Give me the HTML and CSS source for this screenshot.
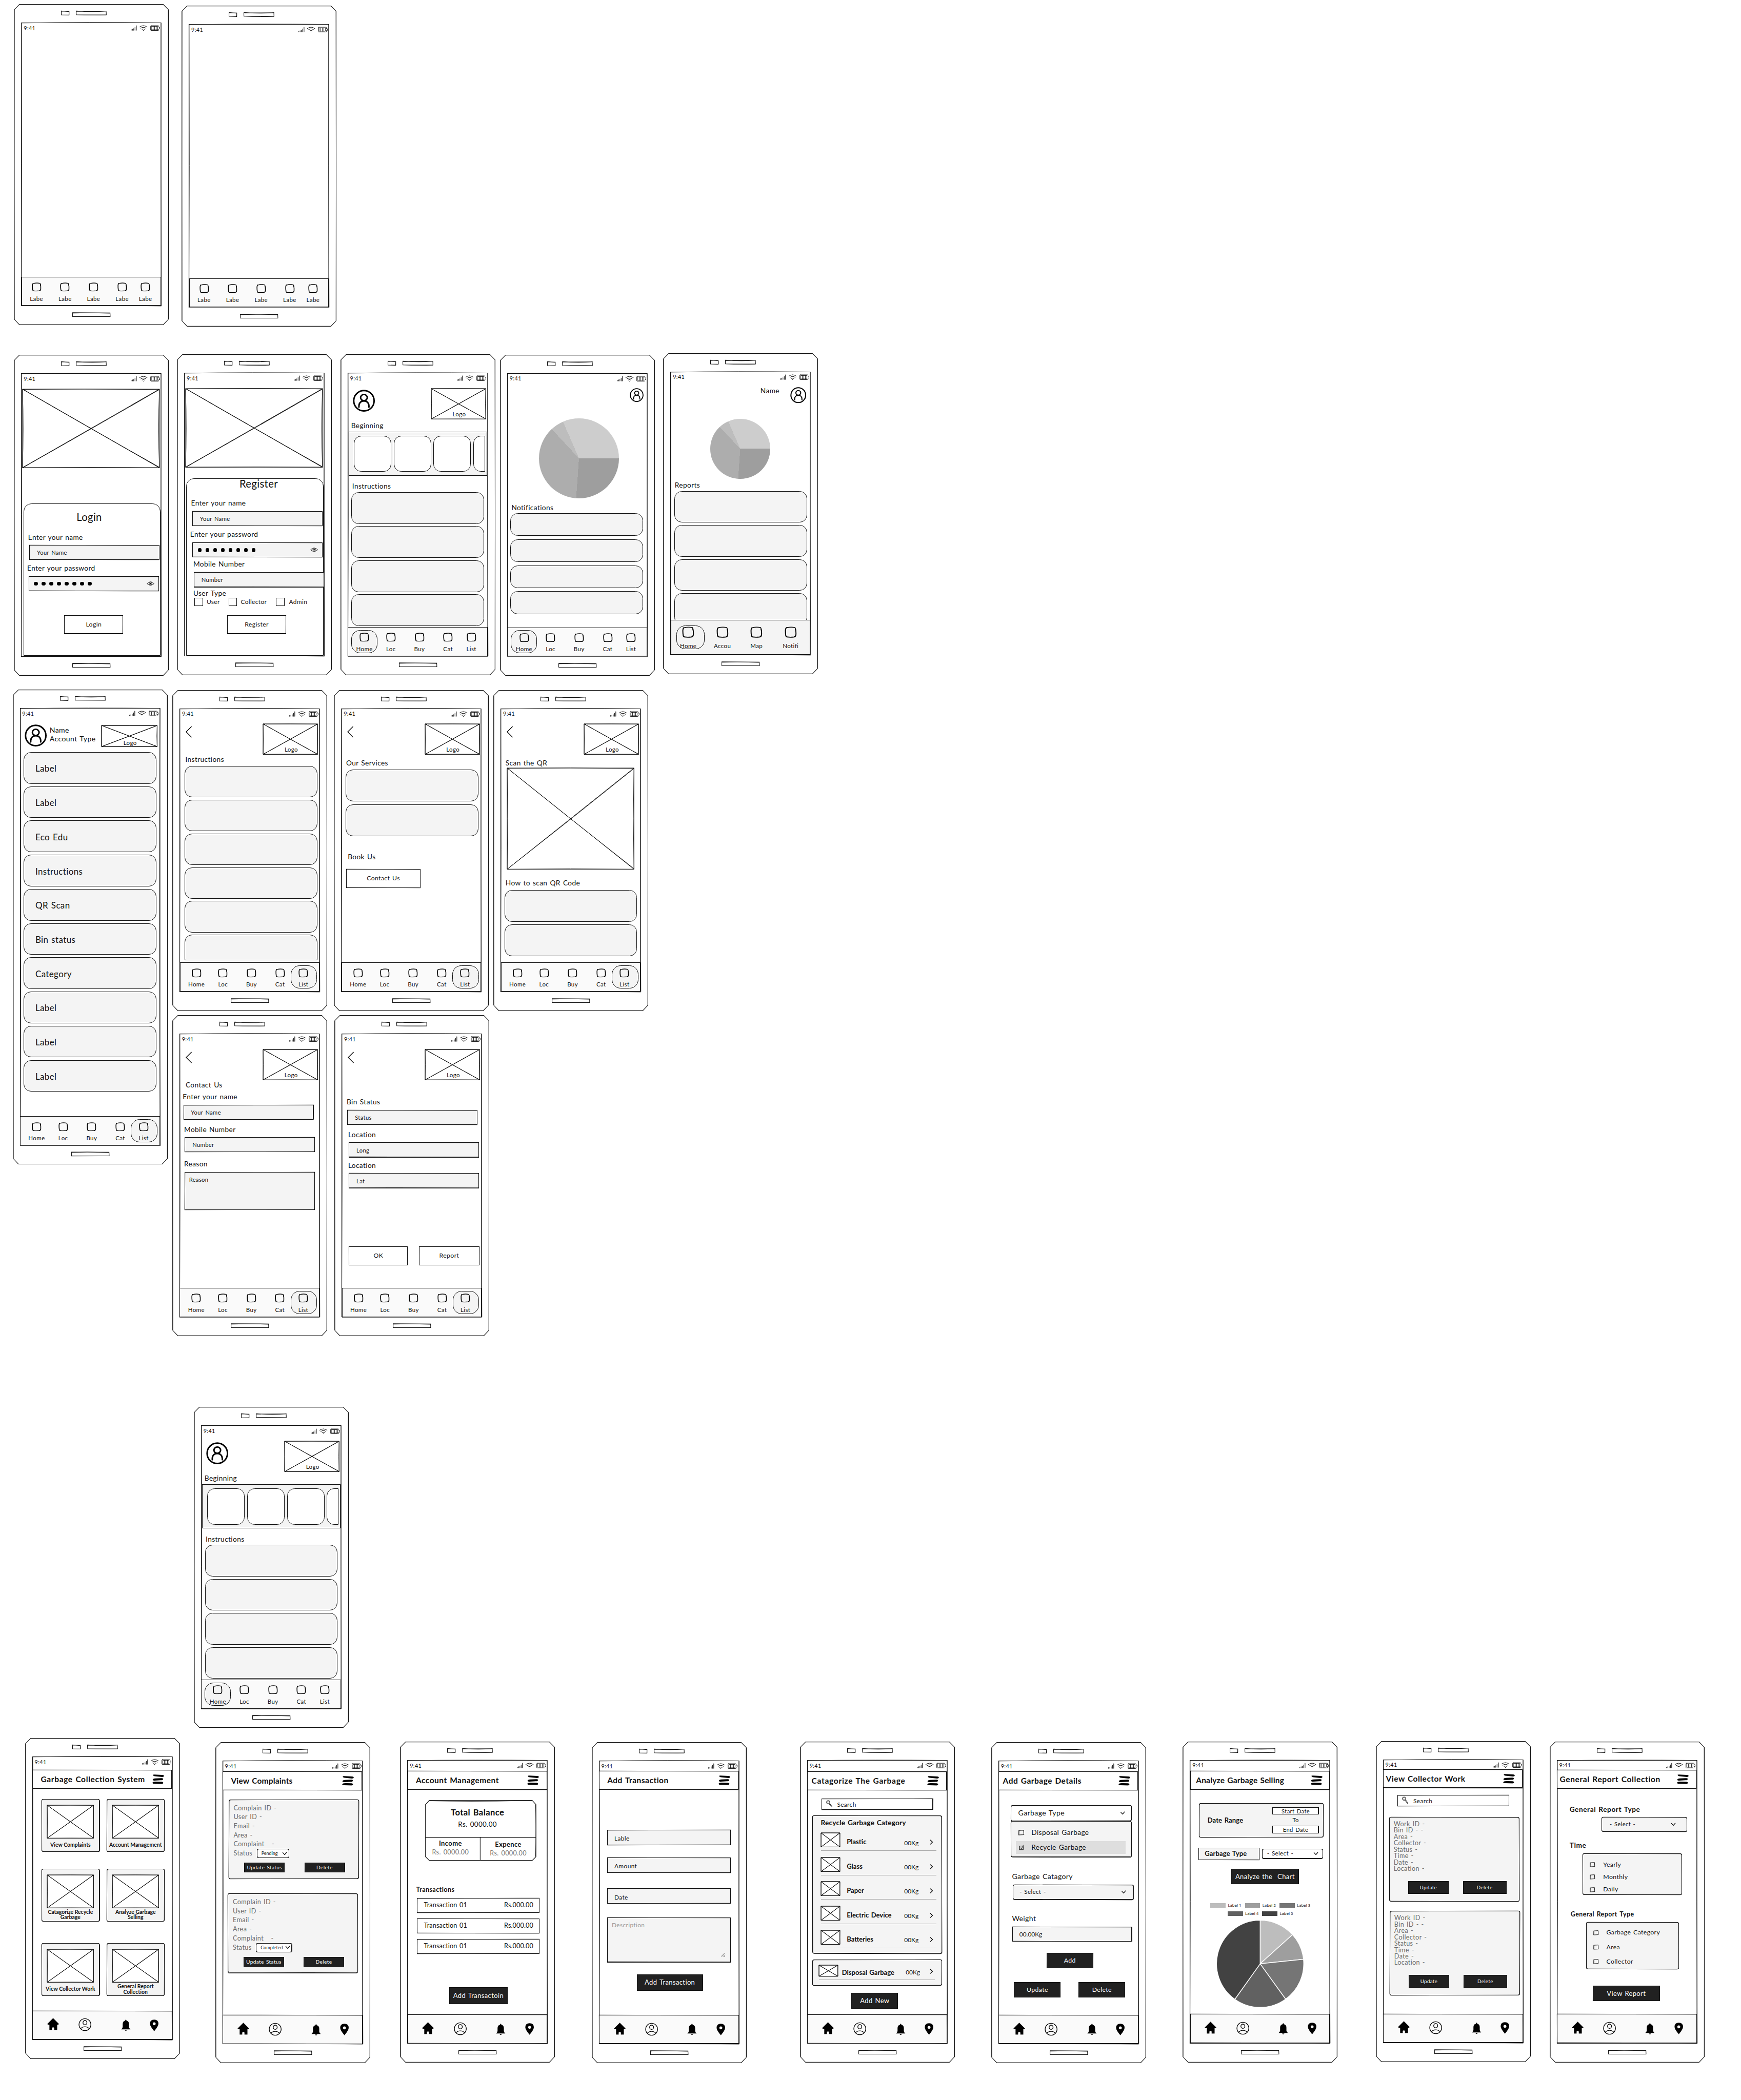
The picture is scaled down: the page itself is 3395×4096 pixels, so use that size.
FILE: index.html
```html
<!DOCTYPE html>
<html lang="en">
<head>
<meta charset="utf-8">
<title>Garbage Collection System wireframes</title>
<link rel="stylesheet" href="styles.css">
</head>
<body>
<svg class="defs" aria-hidden="true">
  <symbol id="case" viewBox="0 0 418 866">
    <g fill="none" stroke="#111" stroke-width="1.5">
      <path d="M15 .8H403L417 15V850L403 865H15L1 850V15Z"/>
      <path d="M1.6 15Q.6 430 1.6 850M416.4 15Q417.6 430 416.6 850" stroke-width="1"/>
      <path d="M128 19l21 .6-.4 10-20.6-.6zM127.500 18.500l21.500 2v9.500M168 19.500l81-.4.4 10-81-.4zM168 18.500q40 3.500 82 .5M168 29q40 1.500 81 .3"/>
      <path d="M158.500 832.500l101 .4.4 10-101.400.2zM158.500 833.500q50-1.600 101 .6"/>
      <path d="M20 50.500H397V814H20Z"/>
      <path d="M19.500 51Q200 48.500 397 50.500Q396 430 398 814M20.600 50Q22 430 20 814Q200 812 398 814.500" stroke-width="1.200"/>
    </g>
  </symbol>
  <symbol id="case-tall" viewBox="0 0 418 1281">
    <g fill="none" stroke="#111" stroke-width="1.5">
      <path d="M15 .8H403L417 15V1265L403 1280H15L1 1265V15Z"/>
      <path d="M1.600 15Q.6 630 1.600 1265M416.400 15Q417.600 630 416.600 1265" stroke-width="1"/>
      <path d="M128 19l21 .6-.4 10-20.600-.6zM127.500 18.500l21.500 2v9.500M168 19.500l81-.4.4 10-81-.4zM168 18.500q40 3.500 82 .5"/>
      <path d="M158.500 1247.500l101 .4.4 10-101.400.2zM158.500 1248.500q50-1.600 101 .6"/>
      <path d="M20 50.500H397V1230H20Z"/>
      <path d="M19.500 51Q200 48.500 397 50.500Q393 630 398 1230M20.600 50Q23 630 20 1230Q200 1227 398 1230.500" stroke-width="1.200"/>
    </g>
  </symbol>
  <symbol id="signals" viewBox="0 0 80 16">
    <g fill="none" stroke="#111" stroke-width="1.600" stroke-linecap="round">
      <path d="M1 14v-2M4.500 14v-3M8 14V9.500M11.500 14V6M15 14V1.500"/>
      <path d="M24 5Q34-2.500 44 5M27 8.500Q34 3.500 41 8.500M30.500 11.500Q34 9 37.500 11.500M33.700 14.500h.6" stroke-width="1.400"/>
      <path d="M55 1.500h19q1.500 0 1.500 1.500v2.500h2.500v5h-2.500V13q0 1.500-1.500 1.500H55q-1.500 0-1.500-1.500V3q0-1.500 1.500-1.500z" stroke-width="1.300"/>
      <path d="M56 3.500h16.500v9H56zM60.200 3.500v9M64.300 3.500v9M68.500 3.500v9" stroke-width="1.200"/>
    </g>
  </symbol>
  <symbol id="cross" viewBox="0 0 100 100" preserveAspectRatio="none" overflow="visible">
    <rect width="100" height="100" fill="#fff"/>
    <g fill="none" stroke="#111" stroke-width="1">
      <path vector-effect="non-scaling-stroke" d="M0 0H100V100H0Z"/>
      <path vector-effect="non-scaling-stroke" d="M0 .3Q50-.6 100 .5Q99 50 100 100Q50 99.300 0 100Q.8 50 0 0"/>
      <path vector-effect="non-scaling-stroke" d="M0 0L100 100M0 100L100 0"/>
      <path vector-effect="non-scaling-stroke" d="M0 100Q50 51 100 .5M0 0Q50 50.500 100 99.500"/>
    </g>
  </symbol>
  <symbol id="tab" viewBox="0 0 26 24">
    <path d="M4.500 2.200Q2 3 1.600 8Q1.400 14 2.400 20Q3 22.600 6 22.800Q13 23.600 20 22.600Q23.600 22 24.200 18Q24.800 11 23.200 5" fill="none" stroke="#000" stroke-width="2.200"/>
    <path d="M4.500 2.600Q13 .4 22 2.200Q23.500 3.600 23.600 8" fill="none" stroke="#000" stroke-width="1.900"/>
  </symbol>
  <symbol id="avatar" viewBox="0 0 60 60">
    <g fill="none" stroke="#000" stroke-width="4" stroke-linecap="round">
      <circle cx="30" cy="30" r="27.500"/>
      <ellipse cx="30" cy="21.500" rx="9" ry="8.500"/>
      <path d="M16.500 47.500V44C16.500 36 22 30.500 30 30.500S43.500 36 43.500 44V47.500"/>
    </g>
  </symbol>
  <symbol id="back" viewBox="0 0 18 33"><path d="M17 1L1.500 16.500L17 32" fill="none" stroke="#000" stroke-width="2"/></symbol>
  <symbol id="down" viewBox="0 0 14 9"><path d="M1.500 1.500L7 7.500L12.500 1" fill="none" stroke="#111" stroke-width="1.800"/></symbol>
  <symbol id="next" viewBox="0 0 9 14"><path d="M1.500 1L7.500 7L1.500 13" fill="none" stroke="#000" stroke-width="1.900"/></symbol>
  <symbol id="eye" viewBox="0 0 21 12">
    <path d="M1 6Q10.500-4 20 6Q10.500 15 1 6Z" fill="none" stroke="#111" stroke-width="1.300"/>
    <circle cx="10.500" cy="6" r="3.600" fill="none" stroke="#111" stroke-width="1.200"/><circle cx="10.500" cy="6" r="1.900"/>
  </symbol>
  <symbol id="menu" viewBox="0 0 32 26">
    <path d="M2 1Q1 .2 6 .3L27 1.400Q32 1.800 31.500 4.500Q31 7.500 24 6.600L7 5Q2.500 4.500 2 1ZM1 14Q2 11 8 10.600L25 9.900Q30 10 29 13Q28.500 15.800 23 15.600L6 16.600Q1 17 1 14ZM.5 22Q2 19.500 9 19.300L25 19.800Q30 20.500 29.500 23Q29 25.700 23 25.500L5 25Q0 24.600 .5 22Z"/>
  </symbol>
  <symbol id="search" viewBox="0 0 17 20">
    <circle cx="5.500" cy="5.800" r="4.600" fill="none" stroke="#111" stroke-width="1.300"/>
    <circle cx="5.500" cy="5.800" r="3.200" fill="none" stroke="#111" stroke-width=".7"/>
    <path d="M7.800 10L14 18.500Q15.500 19 16 17.200L9.600 8.800" fill="#aaa" stroke="#111" stroke-width="1.200"/>
  </symbol>
  <symbol id="home" viewBox="0 0 32 33"><path d="M16 .5L31.500 16Q31.500 18 29.500 18H27V32.500H19V27Q16 23.500 13 27V32.500H6V18H2.500Q.5 18 .5 16Z"/></symbol>
  <symbol id="user" viewBox="0 0 36 36">
    <g fill="none" stroke="#000" stroke-width="2">
      <circle cx="18" cy="18" r="16.500"/><ellipse cx="18" cy="12.500" rx="5.500" ry="5.800"/><path d="M6 29Q11 23.800 18 23.800T30 29"/>
    </g>
  </symbol>
  <symbol id="bell" viewBox="0 0 26 31"><path d="M11.200 3Q11.500 .5 13 .5T14.800 3Q21.500 4.500 21.500 12V20Q21.500 23 25.500 26.500H.5Q4.500 23 4.500 20V12Q4.500 4.500 11.200 3ZM10 28H16Q15.500 30.500 13 30.500T10 28Z"/></symbol>
  <symbol id="pin" viewBox="0 0 24 32"><path fill-rule="evenodd" d="M12 .5Q23.500 .8 23.500 11.500Q23.500 18 12 31.500Q.5 18 .5 11.500Q.5 .8 12 .5ZM12 7.500a4 4 0 1 0 .01 0Z"/></symbol>
  <symbol id="check" viewBox="0 0 16 15"><path d="M1.500 1.800L14 1L14.800 13.200L1 14Z" fill="#f4f4f4" stroke="#111" stroke-width="1.500"/><path d="M1 1.200V14.500" stroke="#111"/></symbol>
  <symbol id="checked" viewBox="0 0 16 18"><path d="M1 4.500H14.500V16.500H1ZM2 5V15.500H13.500V5.500" fill="none" stroke="#111" stroke-width="1.200"/><path d="M4.500 9.500L8 13.500L14.500 1" fill="none" stroke="#111" stroke-width="1.500"/></symbol>
</svg>

<main class="board">

<section class="phone blank-a"><svg class="case"><use href="#case"/></svg><div class="screen">
  <div class="status"><span>9:41</span><svg class="signals"><use href="#signals"/></svg></div>
  <div class="content"></div>
  <nav class="tabs even"><span><svg><use href="#tab"/></svg>Labe</span><span><svg><use href="#tab"/></svg>Labe</span><span><svg><use href="#tab"/></svg>Labe</span><span><svg><use href="#tab"/></svg>Labe</span><span><svg><use href="#tab"/></svg>Labe</span></nav>
</div></section>

<section class="phone blank-b"><svg class="case"><use href="#case"/></svg><div class="screen">
  <div class="status"><span>9:41</span><svg class="signals"><use href="#signals"/></svg></div>
  <div class="content"></div>
  <nav class="tabs even"><span><svg><use href="#tab"/></svg>Labe</span><span><svg><use href="#tab"/></svg>Labe</span><span><svg><use href="#tab"/></svg>Labe</span><span><svg><use href="#tab"/></svg>Labe</span><span><svg><use href="#tab"/></svg>Labe</span></nav>
</div></section>

<section class="phone login"><svg class="case"><use href="#case"/></svg><div class="screen">
  <div class="status"><span>9:41</span><svg class="signals"><use href="#signals"/></svg></div>
  <div class="content">
    <svg class="banner"><use href="#cross"/></svg>
    <form class="sheet">
      <h2>Login</h2>
      <label>Enter your name</label>
      <div class="field sk">Your Name</div>
      <label class="pull">Enter your password</label>
      <div class="field secret pull sk"><i></i><i></i><i></i><i></i><i></i><i></i><i></i><i></i><svg><use href="#eye"/></svg></div>
      <div class="btn sk">Login</div>
    </form>
  </div>
</div></section>

<section class="phone register"><svg class="case"><use href="#case"/></svg><div class="screen">
  <div class="status"><span>9:41</span><svg class="signals"><use href="#signals"/></svg></div>
  <div class="content">
    <svg class="banner"><use href="#cross"/></svg>
    <form class="sheet">
      <h2>Register</h2>
      <label>Enter your name</label>
      <div class="field sk">Your Name</div>
      <label class="pull">Enter your password</label>
      <div class="field secret sk"><i></i><i></i><i></i><i></i><i></i><i></i><i></i><i></i><svg><use href="#eye"/></svg></div>
      <label class="push">Mobile Number</label>
      <div class="field push sk">Number</div>
      <label class="push">User Type</label>
      <div class="roles"><b></b><span>User</span><b></b><span>Collector</span><b></b><span>Admin</span></div>
      <div class="btn sk">Register</div>
    </form>
  </div>
</div></section>

<section class="phone begin begin-a"><svg class="case"><use href="#case"/></svg><div class="screen">
  <div class="status"><span>9:41</span><svg class="signals"><use href="#signals"/></svg></div>
  <div class="content">
    <div class="top"><svg class="avatar"><use href="#avatar"/></svg><div class="logo"><svg><use href="#cross"/></svg><span>Logo</span></div></div>
    <h3>Beginning</h3>
    <div class="strip"><b></b><b></b><b></b><b></b></div>
    <h3 class="in">Instructions</h3>
    <div class="list"><b></b><b></b><b></b><b></b></div>
  </div>
  <nav class="tabs"><span class="on"><svg><use href="#tab"/></svg>Home</span><span><svg><use href="#tab"/></svg>Loc</span><span><svg><use href="#tab"/></svg>Buy</span><span><svg><use href="#tab"/></svg>Cat</span><span><svg><use href="#tab"/></svg>List</span></nav>
</div></section>

<section class="phone notes"><svg class="case"><use href="#case"/></svg><div class="screen">
  <div class="status"><span>9:41</span><svg class="signals"><use href="#signals"/></svg></div>
  <div class="content">
    <div class="top"><svg class="avatar small"><use href="#avatar"/></svg></div>
    <div class="pie"></div>
    <h3>Notifications</h3>
    <div class="list"><b></b><b></b><b></b><b></b></div>
  </div>
  <nav class="tabs"><span class="on"><svg><use href="#tab"/></svg>Home</span><span><svg><use href="#tab"/></svg>Loc</span><span><svg><use href="#tab"/></svg>Buy</span><span><svg><use href="#tab"/></svg>Cat</span><span><svg><use href="#tab"/></svg>List</span></nav>
</div></section>

<section class="phone reports"><svg class="case"><use href="#case"/></svg><div class="screen">
  <div class="status"><span>9:41</span><svg class="signals"><use href="#signals"/></svg></div>
  <div class="content">
    <div class="top"><h3>Name</h3><svg class="avatar"><use href="#avatar"/></svg></div>
    <div class="pie"></div>
    <h3>Reports</h3>
    <div class="list"><b></b><b></b><b></b><b></b></div>
  </div>
  <nav class="tabs four"><span class="on"><svg><use href="#tab"/></svg>Home</span><span><svg><use href="#tab"/></svg>Accou</span><span><svg><use href="#tab"/></svg>Map</span><span><svg><use href="#tab"/></svg>Notifi</span></nav>
</div></section>

<section class="phone tall"><svg class="case"><use href="#case-tall"/></svg><div class="screen">
  <div class="status"><span>9:41</span><svg class="signals"><use href="#signals"/></svg></div>
  <div class="content">
    <div class="top"><svg class="avatar"><use href="#avatar"/></svg><p>Name<br>Account Type</p><div class="logo"><svg><use href="#cross"/></svg><span>Logo</span></div></div>
    <div class="list"><b>Label</b><b>Label</b><b>Eco Edu</b><b>Instructions</b><b>QR Scan</b><b>Bin status</b><b>Category</b><b>Label</b><b>Label</b><b>Label</b></div>
  </div>
  <nav class="tabs"><span><svg><use href="#tab"/></svg>Home</span><span><svg><use href="#tab"/></svg>Loc</span><span><svg><use href="#tab"/></svg>Buy</span><span><svg><use href="#tab"/></svg>Cat</span><span class="on"><svg><use href="#tab"/></svg>List</span></nav>
</div></section>

<section class="phone guide"><svg class="case"><use href="#case"/></svg><div class="screen">
  <div class="status"><span>9:41</span><svg class="signals"><use href="#signals"/></svg></div>
  <div class="content">
    <div class="top"><svg class="back"><use href="#back"/></svg><div class="logo"><svg><use href="#cross"/></svg><span>Logo</span></div></div>
    <h3>Instructions</h3>
    <div class="list"><b></b><b></b><b></b><b></b><b></b><b></b></div>
  </div>
  <nav class="tabs"><span><svg><use href="#tab"/></svg>Home</span><span><svg><use href="#tab"/></svg>Loc</span><span><svg><use href="#tab"/></svg>Buy</span><span><svg><use href="#tab"/></svg>Cat</span><span class="on"><svg><use href="#tab"/></svg>List</span></nav>
</div></section>

<section class="phone services"><svg class="case"><use href="#case"/></svg><div class="screen">
  <div class="status"><span>9:41</span><svg class="signals"><use href="#signals"/></svg></div>
  <div class="content">
    <div class="top"><svg class="back"><use href="#back"/></svg><div class="logo"><svg><use href="#cross"/></svg><span>Logo</span></div></div>
    <h3>Our Services</h3>
    <div class="list"><b></b><b></b></div>
    <h3 class="in">Book Us</h3>
    <div class="btn sk">Contact Us</div>
  </div>
  <nav class="tabs"><span><svg><use href="#tab"/></svg>Home</span><span><svg><use href="#tab"/></svg>Loc</span><span><svg><use href="#tab"/></svg>Buy</span><span><svg><use href="#tab"/></svg>Cat</span><span class="on"><svg><use href="#tab"/></svg>List</span></nav>
</div></section>

<section class="phone scan"><svg class="case"><use href="#case"/></svg><div class="screen">
  <div class="status"><span>9:41</span><svg class="signals"><use href="#signals"/></svg></div>
  <div class="content">
    <div class="top"><svg class="back"><use href="#back"/></svg><div class="logo"><svg><use href="#cross"/></svg><span>Logo</span></div></div>
    <h3>Scan the QR</h3>
    <svg class="code"><use href="#cross"/></svg>
    <h3>How to scan QR Code</h3>
    <div class="list"><b></b><b></b></div>
  </div>
  <nav class="tabs"><span><svg><use href="#tab"/></svg>Home</span><span><svg><use href="#tab"/></svg>Loc</span><span><svg><use href="#tab"/></svg>Buy</span><span><svg><use href="#tab"/></svg>Cat</span><span class="on"><svg><use href="#tab"/></svg>List</span></nav>
</div></section>

<section class="phone contact"><svg class="case"><use href="#case"/></svg><div class="screen">
  <div class="status"><span>9:41</span><svg class="signals"><use href="#signals"/></svg></div>
  <div class="content">
    <div class="top"><svg class="back"><use href="#back"/></svg><div class="logo"><svg><use href="#cross"/></svg><span>Logo</span></div></div>
    <h3>Contact Us</h3>
    <label class="pull">Enter your name</label>
    <div class="field pull sk">Your Name</div>
    <label>Mobile Number</label>
    <div class="field sk">Number</div>
    <label>Reason</label>
    <div class="field area sk">Reason</div>
  </div>
  <nav class="tabs"><span><svg><use href="#tab"/></svg>Home</span><span><svg><use href="#tab"/></svg>Loc</span><span><svg><use href="#tab"/></svg>Buy</span><span><svg><use href="#tab"/></svg>Cat</span><span class="on"><svg><use href="#tab"/></svg>List</span></nav>
</div></section>

<section class="phone bin"><svg class="case"><use href="#case"/></svg><div class="screen">
  <div class="status"><span>9:41</span><svg class="signals"><use href="#signals"/></svg></div>
  <div class="content">
    <div class="top"><svg class="back"><use href="#back"/></svg><div class="logo"><svg><use href="#cross"/></svg><span>Logo</span></div></div>
    <label class="pull">Bin Status</label>
    <div class="field pull sk">Status</div>
    <label>Location</label>
    <div class="field sk">Long</div>
    <label>Location</label>
    <div class="field sk">Lat</div>
    <div class="pair"><div class="btn sk">OK</div><div class="btn sk">Report</div></div>
  </div>
  <nav class="tabs"><span><svg><use href="#tab"/></svg>Home</span><span><svg><use href="#tab"/></svg>Loc</span><span><svg><use href="#tab"/></svg>Buy</span><span><svg><use href="#tab"/></svg>Cat</span><span class="on"><svg><use href="#tab"/></svg>List</span></nav>
</div></section>

<section class="phone begin begin-b"><svg class="case"><use href="#case"/></svg><div class="screen">
  <div class="status"><span>9:41</span><svg class="signals"><use href="#signals"/></svg></div>
  <div class="content">
    <div class="top"><svg class="avatar"><use href="#avatar"/></svg><div class="logo"><svg><use href="#cross"/></svg><span>Logo</span></div></div>
    <h3>Beginning</h3>
    <div class="strip"><b></b><b></b><b></b><b></b></div>
    <h3 class="in">Instructions</h3>
    <div class="list"><b></b><b></b><b></b><b></b></div>
  </div>
  <nav class="tabs"><span class="on"><svg><use href="#tab"/></svg>Home</span><span><svg><use href="#tab"/></svg>Loc</span><span><svg><use href="#tab"/></svg>Buy</span><span><svg><use href="#tab"/></svg>Cat</span><span><svg><use href="#tab"/></svg>List</span></nav>
</div></section>

<section class="phone dash"><svg class="case"><use href="#case"/></svg><div class="screen">
  <div class="status"><span>9:41</span><svg class="signals"><use href="#signals"/></svg></div>
  <div class="content">
    <h1 class="bar sk">Garbage Collection System<svg><use href="#menu"/></svg></h1>
    <div class="tiles">
      <div class="tile sk"><svg><use href="#cross"/></svg><p>View Complaints</p></div>
      <div class="tile sk"><svg><use href="#cross"/></svg><p>Account Management</p></div>
      <div class="tile sk"><svg><use href="#cross"/></svg><p>Catagorize Recycle<br>Garbage</p></div>
      <div class="tile sk"><svg><use href="#cross"/></svg><p>Analyze Garbage<br>Selling</p></div>
      <div class="tile sk"><svg><use href="#cross"/></svg><p>View Collector Work</p></div>
      <div class="tile sk"><svg><use href="#cross"/></svg><p>General Report<br>Collection</p></div>
    </div>
  </div>
  <nav class="dock sk"><svg><use href="#home"/></svg><svg><use href="#user"/></svg><svg><use href="#bell"/></svg><svg><use href="#pin"/></svg></nav>
</div></section>

<section class="phone complaints"><svg class="case"><use href="#case"/></svg><div class="screen">
  <div class="status"><span>9:41</span><svg class="signals"><use href="#signals"/></svg></div>
  <div class="content">
    <h1 class="bar sk">View Complaints<svg><use href="#menu"/></svg></h1>
    <div class="record sk">
      <p>Complain ID -</p><p>User ID -</p><p>Email -</p><p>Area -</p><p>Complaint&nbsp;&nbsp; -</p>
      <p class="state">Status<span class="select sk">Pending<svg><use href="#down"/></svg></span></p>
      <div class="pair"><div class="btn dark sk">Update Status</div><div class="btn dark sk">Delete</div></div>
    </div>
    <div class="record second sk">
      <p>Complain ID -</p><p>User ID -</p><p>Email -</p><p>Area -</p><p>Complaint&nbsp;&nbsp; -</p>
      <p class="state">Status<span class="select wide sk">Completed<svg><use href="#down"/></svg></span></p>
      <div class="pair"><div class="btn dark sk">Update Status</div><div class="btn dark sk">Delete</div></div>
    </div>
  </div>
  <nav class="dock sk"><svg><use href="#home"/></svg><svg><use href="#user"/></svg><svg><use href="#bell"/></svg><svg><use href="#pin"/></svg></nav>
</div></section>

<section class="phone account"><svg class="case"><use href="#case"/></svg><div class="screen">
  <div class="status"><span>9:41</span><svg class="signals"><use href="#signals"/></svg></div>
  <div class="content">
    <h1 class="bar sk">Account Management<svg><use href="#menu"/></svg></h1>
    <div class="balance">
      <svg class="outline" viewBox="0 0 301 164"><g fill="none" stroke="#111" stroke-width="1.600"><path d="M11 1H290L300 12V153L290 163H11L1 153V12Z"/><path d="M11 1.600Q150 4 290 .6M299 12Q301 80 299 153M1 100.500H300M149 100.500V163" /></g></svg>
      <div class="total"><strong>Total Balance</strong><span>Rs. 0000.00</span></div>
      <div class="part"><strong>Income</strong><span>Rs. 0000.00</span></div>
      <div class="part late"><strong>Expence</strong><span>Rs. 0000.00</span></div>
    </div>
    <h4>Transactions</h4>
    <div class="entry sk"><span>Transaction 01</span><span>Rs.000.00</span></div>
    <div class="entry sk"><span>Transaction 01</span><span>Rs.000.00</span></div>
    <div class="entry sk"><span>Transaction 01</span><span>Rs.000.00</span></div>
    <div class="btn dark sk">Add Transactoin</div>
  </div>
  <nav class="dock sk"><svg><use href="#home"/></svg><svg><use href="#user"/></svg><svg><use href="#bell"/></svg><svg><use href="#pin"/></svg></nav>
</div></section>

<section class="phone adding"><svg class="case"><use href="#case"/></svg><div class="screen">
  <div class="status"><span>9:41</span><svg class="signals"><use href="#signals"/></svg></div>
  <div class="content">
    <h1 class="bar sk">Add Transaction<svg><use href="#menu"/></svg></h1>
    <div class="field sk">Lable</div>
    <div class="field sk">Amount</div>
    <div class="field sk">Date</div>
    <div class="field area sk">Description<svg class="grip" viewBox="0 0 12 11"><path d="M.5 10L10 .5M5 10.500L10.500 5M8.500 10.500L11 8" fill="none" stroke="#111"/></svg></div>
    <div class="btn dark sk">Add Transaction</div>
  </div>
  <nav class="dock sk"><svg><use href="#home"/></svg><svg><use href="#user"/></svg><svg><use href="#bell"/></svg><svg><use href="#pin"/></svg></nav>
</div></section>

<section class="phone category"><svg class="case"><use href="#case"/></svg><div class="screen">
  <div class="status"><span>9:41</span><svg class="signals"><use href="#signals"/></svg></div>
  <div class="content">
    <h1 class="bar sk">Catagorize The Garbage<svg><use href="#menu"/></svg></h1>
    <div class="search sk"><svg><use href="#search"/></svg>Search</div>
    <div class="panel sk">
      <h3>Recycle Garbage Category</h3>
      <div class="item"><svg class="thumb"><use href="#cross"/></svg><strong>Plastic</strong><span>00Kg</span><svg class="next"><use href="#next"/></svg></div>
      <div class="item"><svg class="thumb"><use href="#cross"/></svg><strong>Glass</strong><span>00Kg</span><svg class="next"><use href="#next"/></svg></div>
      <div class="item"><svg class="thumb"><use href="#cross"/></svg><strong>Paper</strong><span>00Kg</span><svg class="next"><use href="#next"/></svg></div>
      <div class="item"><svg class="thumb"><use href="#cross"/></svg><strong>Electric Device</strong><span>00Kg</span><svg class="next"><use href="#next"/></svg></div>
      <div class="item"><svg class="thumb"><use href="#cross"/></svg><strong>Batteries</strong><span>00Kg</span><svg class="next"><use href="#next"/></svg></div>
    </div>
    <div class="panel single sk">
      <div class="item"><svg class="thumb"><use href="#cross"/></svg><strong>Disposal Garbage</strong><span>00Kg</span><svg class="next"><use href="#next"/></svg></div>
    </div>
    <div class="btn dark sk">Add New</div>
  </div>
  <nav class="dock sk"><svg><use href="#home"/></svg><svg><use href="#user"/></svg><svg><use href="#bell"/></svg><svg><use href="#pin"/></svg></nav>
</div></section>

<section class="phone details"><svg class="case"><use href="#case"/></svg><div class="screen">
  <div class="status"><span>9:41</span><svg class="signals"><use href="#signals"/></svg></div>
  <div class="content">
    <h1 class="bar sk">Add Garbage Details<svg><use href="#menu"/></svg></h1>
    <div class="select head sk">Garbage Type<svg><use href="#down"/></svg></div>
    <div class="options sk">
      <div><svg><use href="#check"/></svg>Disposal Garbage</div>
      <div class="chosen"><svg><use href="#checked"/></svg>Recycle Garbage</div>
    </div>
    <label>Garbage Catagory</label>
    <div class="select grey sk">- Select -<svg><use href="#down"/></svg></div>
    <label>Weight</label>
    <div class="field sk">00.00Kg</div>
    <div class="btn dark sk">Add</div>
    <div class="pair"><div class="btn dark sk">Update</div><div class="btn dark sk">Delete</div></div>
  </div>
  <nav class="dock sk"><svg><use href="#home"/></svg><svg><use href="#user"/></svg><svg><use href="#bell"/></svg><svg><use href="#pin"/></svg></nav>
</div></section>

<section class="phone analyze"><svg class="case"><use href="#case"/></svg><div class="screen">
  <div class="status"><span>9:41</span><svg class="signals"><use href="#signals"/></svg></div>
  <div class="content">
    <h1 class="bar sk">Analyze Garbage Selling<svg><use href="#menu"/></svg></h1>
    <div class="range sk"><strong>Date Range</strong><div><span class="date sk">Start Date</span><span>To</span><span class="date sk">End Date</span></div></div>
    <div class="filter"><strong class="sk">Garbage Type</strong><div class="select sk">- Select -<svg><use href="#down"/></svg></div></div>
    <div class="btn dark sk">Analyze the&nbsp; Chart</div>
    <div class="legend"><span>Label 1</span><span>Label 2</span><span>Label 3</span><span>Label 4</span><span>Label 5</span></div>
    <svg class="chart" viewBox="-118 -118 236 236">
      <g stroke="#fff" stroke-width="2">
        <path fill="#bdbdbd" d="M0 0V-117.500A117.500 117.500 0 0 1 87.300 -78.600Z"/>
        <path fill="#9e9e9e" d="M0 0L87.300 -78.600A117.500 117.500 0 0 1 116.900 -12.300Z"/>
        <path fill="#757575" d="M0 0L116.900 -12.300A117.500 117.500 0 0 1 68.700 95.300Z"/>
        <path fill="#616161" d="M0 0L68.700 95.300A117.500 117.500 0 0 1 -68.200 95.700Z"/>
        <path fill="#424242" d="M0 0L-68.200 95.700A117.500 117.500 0 0 1 0 -117.500Z"/>
      </g>
    </svg>
  </div>
  <nav class="dock sk"><svg><use href="#home"/></svg><svg><use href="#user"/></svg><svg><use href="#bell"/></svg><svg><use href="#pin"/></svg></nav>
</div></section>

<section class="phone work"><svg class="case"><use href="#case"/></svg><div class="screen">
  <div class="status"><span>9:41</span><svg class="signals"><use href="#signals"/></svg></div>
  <div class="content">
    <h1 class="bar sk">View Collector Work<svg><use href="#menu"/></svg></h1>
    <div class="search sk"><svg><use href="#search"/></svg>Search</div>
    <div class="record sk">
      <p>Work ID -</p><p>Bin ID - -</p><p>Area -</p><p>Collector -</p><p>Status -</p><p>Time -</p><p>Date -</p><p>Location -</p>
      <div class="pair"><div class="btn dark sk">Update</div><div class="btn dark sk">Delete</div></div>
    </div>
    <div class="record second sk">
      <p>Work ID -</p><p>Bin ID - -</p><p>Area -</p><p>Collector -</p><p>Status -</p><p>Time -</p><p>Date -</p><p>Location -</p>
      <div class="pair"><div class="btn dark sk">Update</div><div class="btn dark sk">Delete</div></div>
    </div>
  </div>
  <nav class="dock sk"><svg><use href="#home"/></svg><svg><use href="#user"/></svg><svg><use href="#bell"/></svg><svg><use href="#pin"/></svg></nav>
</div></section>

<section class="phone general"><svg class="case"><use href="#case"/></svg><div class="screen">
  <div class="status"><span>9:41</span><svg class="signals"><use href="#signals"/></svg></div>
  <div class="content">
    <h1 class="bar sk">General Report Collection<svg><use href="#menu"/></svg></h1>
    <h4>General Report Type</h4>
    <div class="select grey sk">- Select -<svg><use href="#down"/></svg></div>
    <h4>Time</h4>
    <div class="checks sk"><p><svg><use href="#check"/></svg>Yearly</p><p><svg><use href="#check"/></svg>Monthly</p><p><svg><use href="#check"/></svg>Daily</p></div>
    <h4 class="minor">General Report Type</h4>
    <div class="checks low sk"><p><svg><use href="#check"/></svg>Garbage Category</p><p><svg><use href="#check"/></svg>Area</p><p><svg><use href="#check"/></svg>Collector</p></div>
    <div class="btn dark sk">View Report</div>
  </div>
  <nav class="dock sk"><svg><use href="#home"/></svg><svg><use href="#user"/></svg><svg><use href="#bell"/></svg><svg><use href="#pin"/></svg></nav>
</div></section>

</main>
</body>
</html>
```
FILE: styles.css
```css
/* 1rem is ten units of the wireframe canvas */
html { font-size: 7.23px; }
*, *::before, *::after { box-sizing: border-box; }
body {
  margin: 0;
  background: #fff;
  color: #111;
  font: 1.7rem/2rem Lato, "Open Sans", sans-serif;
  letter-spacing: .03em;
  word-spacing: .1em;
  white-space: nowrap;
}
h1, h2, h3, h4, p { margin: 0; font-weight: 400; }
h3, label { font-size: 1.9rem; line-height: 2rem; }
h4 { font-size: 1.75rem; line-height: 2rem; font-weight: 700; }
svg { display: block; overflow: visible; }
b, i, strong { font-style: normal; }
.defs { position: absolute; width: 0; height: 0; }
.board { position: relative; width: 3395px; height: 4096px; overflow: hidden; }

/* phones pinned on the canvas */
.phone { position: absolute; display: grid; width: 41.8rem; height: 86.6rem; }
.blank-a { left: 3.8rem; top: 1.1rem; }
.blank-b { left: 49rem; top: 1.5rem; }
.login { left: 3.8rem; top: 95.7rem; }
.register { left: 47.75rem; top: 95.55rem; }
.begin-a { left: 91.8rem; top: 95.58rem; }
.notes { left: 134.86rem; top: 95.66rem; }
.reports { left: 178.9rem; top: 95.26rem; }
.tall { left: 3.4rem; top: 186rem; height: 128.1rem; }
.guide { left: 46.5rem; top: 186.1rem; }
.services { left: 90.1rem; top: 186.1rem; }
.scan { left: 133.1rem; top: 186.1rem; }
.contact { left: 46.46rem; top: 273.88rem; }
.bin { left: 90.2rem; top: 273.88rem; }
.begin-b { left: 52.27rem; top: 379.58rem; }
.dash { left: 6.75rem; top: 468.86rem; }
.complaints { left: 58.06rem; top: 470rem; }
.account { left: 107.94rem; top: 469.87rem; }
.adding { left: 159.56rem; top: 469.98rem; }
.category { left: 215.75rem; top: 469.87rem; }
.details { left: 267.35rem; top: 469.98rem; }
.analyze { left: 319rem; top: 469.78rem; }
.work { left: 371.07rem; top: 469.66rem; }
.general { left: 417.93rem; top: 469.78rem; }

.case { grid-area: 1 / 1; width: 100%; height: 100%; }
.screen {
  grid-area: 1 / 1;
  display: flex;
  flex-direction: column;
  width: 37.7rem;
  height: 76.4rem;
  margin: 5rem 0 0 2rem;
}
.tall .screen { height: 118rem; }
.status {
  display: flex;
  justify-content: space-between;
  align-items: center;
  flex: none;
  height: 3rem;
  padding: 0 .2rem 0 .6rem;
  font-size: 1.5rem;
}
.signals { width: 8rem; height: 1.6rem; }
.content {
  display: grid;
  flex: 1;
  min-height: 0;
  align-items: end;
  align-content: start;
  justify-items: start;
}

/* pencil line: a second, slightly tilted outline over the first */
.sk { position: relative; border: 1px solid #111; }
.sk::after {
  content: "";
  position: absolute;
  inset: -1px;
  border: 1px solid #111;
  transform: rotate(.12deg) skewX(.3deg);
  pointer-events: none;
}
.sk:nth-child(even)::after { transform: rotate(-.1deg) skewX(-.4deg); }

/* bottom navigation */
.tabs, .dock { flex: none; height: 7.83rem; background: #fafafa; border: 1px solid #111; }
.tabs {
  display: grid;
  grid-template-columns: 8.7rem 5.6rem 9.8rem 5.6rem 7rem;
  border-width: 1.5px 1px;
  box-shadow: 0 1px #555;
  font-size: 1.6rem;
}
.tabs.even { grid-template-columns: 7.8rem 7.6rem 7.8rem 7.6rem 5rem; }
.tabs span { position: relative; display: flex; flex-direction: column; align-items: center; padding-top: 1.4rem; z-index: 0; }
.tabs svg { flex: none; width: 2.6rem; height: 2.4rem; margin-bottom: 1rem; }
.tabs .on::before {
  content: "";
  position: absolute;
  z-index: -1;
  top: .65rem;
  left: .75rem;
  width: 7.1rem;
  height: 6.25rem;
  background: #f4f4f4;
  border: 1px solid #111;
  border-radius: 2.4rem;
}
.tabs .on:last-child::before { left: .1rem; }
.tabs.four { grid-template-columns: repeat(4, 9.2rem); height: 9.4rem; background: #f4f4f4; }
.tabs.four span { padding-top: 1.6rem; }
.tabs.four svg { width: 3.3rem; height: 3rem; margin-bottom: 1.3rem; }
.tabs.four .on::before { top: 1.4rem; left: 1.4rem; width: 7.6rem; }

.dock { display: flex; align-items: flex-start; padding: 1.9rem 0 0 3.8rem; }
.dock svg { flex: none; }
.dock svg:nth-child(1) { width: 3.2rem; height: 3.3rem; margin-right: 5.3rem; }
.dock svg:nth-child(2) { width: 3.5rem; height: 3.6rem; margin-right: 7.9rem; }
.dock svg:nth-child(3) { width: 2.6rem; height: 3.1rem; margin: .4rem 5.2rem 0 0; }
.dock svg:nth-child(4) { width: 2.4rem; height: 3.2rem; margin-top: .3rem; }

/* shared pieces */
.top { display: flex; justify-content: space-between; width: 100%; height: 8.2rem; padding: 0 .5rem 0 1.3rem; }
.avatar { width: 6rem; height: 6rem; margin-top: .3rem; }
.back { width: 1.7rem; height: 3.2rem; margin: .6rem 0 0 .3rem; }
.logo { display: grid; grid-template: 100% / 100%; width: 14.7rem; height: 8.2rem; }
.logo svg { grid-area: 1 / 1; width: 100%; height: 100%; }
.logo span { grid-area: 1 / 1; place-self: end center; padding: 0 0 .2rem .4rem; font-size: 1.6rem; z-index: 1; }
.list { display: grid; gap: .66rem; width: 35.75rem; margin-left: 1rem; }
.list b { height: 8.53rem; background: #f4f4f4; border: 1px solid #111; border-radius: 2rem; font-weight: 400; }
.field {
  width: 35.1rem;
  height: 4.05rem;
  padding: 1rem 1.9rem;
  background: #f4f4f4;
  font-size: 1.55rem;
  line-height: 2rem;
}
.btn { display: grid; place-items: center; height: 5.1rem; background: #fff; font-size: 1.7rem; }
.dark { height: 4.2rem; background: #212121; color: #fff; font-size: 1.8rem; }
.pair { display: flex; align-items: flex-end; }
.select { display: flex; align-items: center; justify-content: space-between; background: #fff; border-radius: 3px; font-size: 1.6rem; }
.select::after, .record::after, .panel::after, .tile::after, .options::after, .range::after, .checks::after { border-radius: 4px; }
.select svg { width: 1.4rem; height: .9rem; }
.grey { background: #f4f4f4; }

/* sign-in sheets */
.login .content { grid-template-rows: 22.5rem 50.7rem; }
.register .content { grid-template-rows: 22.54rem 50.75rem; }
.banner { width: 36.9rem; height: 21.2rem; margin-left: .35rem; }
.sheet { display: grid; align-items: end; align-content: start; justify-items: start; width: 37rem; height: 41.1rem; margin-left: .5rem; border: 1px solid #111; border-radius: 2.1rem 2.1rem 0 0; }
.login .sheet { grid-template-rows: 5.15rem 4.85rem 5.15rem 3.2rem 5.2rem 11.53rem; }
.register .sheet { height: 47.8rem; grid-template-rows: 2.93rem 4.67rem 5.2rem 3.24rem 5.2rem 2.76rem 5.27rem 2.6rem 2.5rem 7.47rem; }
.sheet h2 { margin-left: 14.2rem; font-size: 2.8rem; line-height: 3rem; }
.sheet label { margin-left: 1.15rem; }
.sheet label.pull { margin-left: .9rem; }
.sheet .field { margin-left: 1.5rem; }
.login .field.pull { margin-left: 1.3rem; }
.sheet label.push { margin-left: 1.75rem; }
.sheet .field.push { margin-left: 1.9rem; }
.secret { display: flex; align-items: center; gap: 1.08rem; padding: 0 1.1rem 0 1.3rem; }
.secret i { width: 1rem; height: 1.05rem; border-radius: 45%; background: #000; }
.secret svg { width: 2.1rem; height: 1.2rem; margin-left: auto; }
.sheet .btn { width: 15.9rem; margin-left: 10.9rem; }
.roles { display: flex; align-items: center; margin-left: 2.1rem; font-size: 1.65rem; }
.roles b { width: 2.25rem; height: 2.25rem; border: 1.5px solid #111; background: #fff; }
.roles span { padding-left: 1rem; width: 6.95rem; }
.roles span:nth-of-type(2) { width: 10.55rem; }
.roles span:nth-of-type(3) { padding-left: 1.2rem; }

/* home feed */
.begin .content { grid-template-rows: 9.42rem 2.84rem 12.49rem 3.87rem 36.68rem; }
.content > h3 { margin-left: .9rem; }
.content > h3.in { margin-left: 1.2rem; }
.strip { display: flex; gap: .65rem; width: 37.3rem; height: 11.9rem; margin-left: .25rem; padding: .95rem .4rem .9rem 1.25rem; background: #f4f4f4; border: 1px solid #111; }
.strip b { flex: none; width: 10.1rem; background: #fff; border: 1px solid #111; border-radius: 2rem; }
.strip b:last-child { flex: 1; border-radius: 2rem 0 0 2rem; }

/* notifications and reports */
.notes .content { grid-template-rows: 4.86rem 25.89rem 3.53rem 27.72rem; }
.notes .top { height: 3.75rem; }
.notes .avatar { width: 3.75rem; height: 3.75rem; margin: 0 .4rem 0 auto; }
.pie { border-radius: 50%; background: conic-gradient(from 90deg, #9e9e9e 94deg, #adadad 94deg 227deg, #bdbdbd 227deg 246.5deg, #cdcdcd 246.5deg); }
.notes .pie { width: 21.57rem; height: 21.57rem; margin-left: 8.45rem; }
.notes .list { gap: .9rem; margin-left: .8rem; }
.notes .list b { height: 6.13rem; }
.reports .content { grid-template-rows: 5.5rem 20.37rem 2.73rem 35.5rem; flex: none; height: 64rem; }
.reports .top { height: 4.3rem; padding: 0 1.1rem 0 24.2rem; }
.reports .avatar { width: 4.35rem; height: 4.35rem; margin: 0; }
.reports .pie { width: 16.1rem; height: 16.1rem; margin-left: 10.7rem; }
.notes .content > h3, .reports .content > h3 { margin-left: 1.1rem; }
.reports .list { height: 34.9rem; overflow: hidden; align-content: start; }

/* long menu */
.tall .content { grid-template-rows: 7.5rem 93rem; }
.tall .top { height: 6rem; justify-content: flex-start; }
.tall .avatar { flex: none; margin: 0; }
.tall .top p { width: 14.7rem; padding: .15rem 0 0 .7rem; font-size: 1.95rem; line-height: 2.4rem; }
.tall .logo { height: 5.7rem; width: 15rem; flex: none; margin-top: .2rem; }
.tall .logo span { padding-bottom: 0; }
.tall .list b { padding: 3.1rem 0 0 3rem; font-size: 2.35rem; line-height: 2.4rem; }
.tall .list { gap: .7rem; }

/* back-arrow screens */
.guide .content { grid-template-rows: 9.4rem 2.34rem 53.26rem; }
.guide .list { height: 52.5rem; gap: .59rem; margin-left: 1.3rem; overflow: hidden; border-bottom: 1px solid #111; align-content: start; }
.guide .content > h3 { margin-left: 1.5rem; }
.services .content { grid-template-rows: 9.4rem 3.3rem 18.74rem 6.62rem 7.34rem; }
.services .content > h3, .scan .content > h3 { margin-left: 1.25rem; }
.services .list { gap: .8rem; margin-left: 1.15rem; }
.services .content > h3.in { margin-left: 1.7rem; }
.services .btn { width: 20rem; margin-left: 1.3rem; }
.scan .content { grid-template-rows: 9.4rem 3.3rem 27.7rem 4.67rem 18.8rem; }
.scan .code { width: 34.2rem; height: 27.3rem; margin-left: 1.75rem; }
.scan .list { gap: .75rem; }
.contact .content { grid-template-rows: 9.4rem 2.36rem 3.24rem 5.23rem 3.56rem 5.18rem 4.18rem 11.43rem; }
.contact .content > h3 { margin-left: 1.6rem; }
.contact label { margin-left: 1.2rem; }
.contact label.pull { margin-left: .8rem; }
.contact .field { margin-left: 1.4rem; }
.contact .field.pull { margin-left: 1rem; }
.contact .area { height: 10.3rem; padding-left: 1rem; }
.bin .content { grid-template-rows: 9.4rem 7rem 5.2rem 3.6rem 5.2rem 3.1rem 5.18rem 20.77rem; }
.bin label { margin-left: 1.7rem; }
.bin label.pull { margin-left: 1.3rem; }
.bin .field { margin-left: 1.9rem; }
.bin .field.pull { margin-left: 1.5rem; }
.bin .pair { gap: 3rem; margin-left: 1.9rem; }
.bin .btn { width: 15.9rem; }
.bin .btn + .btn { width: 16.3rem; }

/* admin screens */
.bar { display: flex; align-items: center; justify-content: space-between; width: 37.6rem; height: 5.1rem; padding: 0 2rem 0 2.1rem; background: #fff; font-size: 2.15rem; font-weight: 700; letter-spacing: .03em; }
.bar svg { flex: none; width: 3.2rem; height: 2.6rem; }

.dash .content { grid-template-rows: 5.66rem 55.9rem; }
.dash .bar { letter-spacing: .04em; }
.tiles { display: grid; grid-template: 17.04rem 18.8rem 20.08rem / 15.7rem 15.6rem; column-gap: 1.9rem; align-items: end; margin-left: 2.4rem; }
.tile { display: grid; grid-template-rows: 1.5rem 8.9rem 3.7rem; justify-items: center; height: 14.2rem; background: #f4f4f4; border-radius: 3px; font-size: 1.45rem; font-weight: 700; line-height: 1.45rem; text-align: center; letter-spacing: 0; word-spacing: 0; }
.tile svg { grid-row: 2; width: 12.5rem; height: 8.9rem; }
.tile p { grid-row: 3; align-self: center; font-weight: 700; }

.record { background: #f4f4f4; width: 35.1rem; color: #6b6b6b; border-radius: 3px; margin-left: 1.6rem; }
.complaints .content { grid-template-rows: 4.98rem 24rem 25.37rem; }
.complaints .bar { letter-spacing: .01em; }
.complaints .record { height: 21.5rem; padding: .9rem 0 0 1.2rem; font-size: 1.75rem; line-height: 2.45rem; }
.complaints .second { margin-left: 1.4rem; }
.state { display: flex; align-items: center; }
.state .select { width: 8.7rem; height: 2.5rem; margin-left: 1.2rem; padding: 0 .4rem 0 1.1rem; color: #111; font-size: 1.25rem; letter-spacing: 0; }
.state .wide { width: 9.75rem; }
.record .btn { width: 10.9rem; height: 2.65rem; font-size: 1.4rem; }
.complaints .pair { gap: 5.3rem; margin: 1.25rem 0 0 2.9rem; }

.account .content { grid-template-rows: 5rem 19.1rem 8.82rem 5.26rem 5.57rem 5.51rem 13.54rem; }
.balance { display: grid; grid-template: 10rem 6.4rem / 14.9rem 15.1rem; width: 30rem; margin-left: 4.7rem; text-align: center; }
.outline { grid-area: 1 / 1 / 3 / 3; width: 100%; height: 16.4rem; }
.total { grid-area: 1 / 1 / 2 / 3; display: grid; grid-template-rows: 3.2rem 3.3rem; padding: 1.8rem 1.7rem 0 0; align-items: center; }
.total strong { font-size: 2.3rem; }
.total span { font-size: 1.85rem; }
.part { grid-area: 2 / 1; display: grid; grid-template-rows: 2.5rem 2.5rem; align-items: center; align-content: start; padding: .5rem 1.2rem 0 0; }
.late { grid-column: 2; padding: .75rem 0 0; }
.part strong { font-size: 1.8rem; }
.part span { color: #777; font-size: 1.75rem; }
.account h4 { margin-left: 2.3rem; }
.entry { display: flex; justify-content: space-between; align-items: center; width: 33.1rem; height: 4.05rem; margin-left: 2.45rem; padding: 0 1.5rem 0 1.8rem; font-size: 1.75rem; letter-spacing: .01em; }
.account .btn { width: 15.8rem; height: 4.5rem; margin-left: 11.2rem; }

.adding .content { grid-template-rows: 4.83rem 14.93rem 7.52rem 8.32rem 15.84rem 7.56rem; }
.adding .field { width: 33.4rem; height: 4.15rem; margin-left: 2.2rem; padding: 1.3rem 1.8rem; font-size: 1.65rem; }
.adding .area { position: relative; display: flex; justify-content: space-between; height: 12.1rem; padding: .9rem 1.4rem 1.4rem 1.1rem; color: #999; }
.grip { align-self: flex-end; width: 1.2rem; height: 1.1rem; }
.adding .btn { width: 17.8rem; height: 4.4rem; margin-left: 10.2rem; }

.search { display: flex; align-items: center; gap: 1.3rem; width: 30.1rem; height: 3rem; margin-left: 3.8rem; padding: .4rem 0 0 1.1rem; font-size: 1.65rem; }
.search svg { width: 1.7rem; height: 2rem; margin-top: -.6rem; }
.category .content { grid-template-rows: 5.06rem 5.28rem 38.8rem 8.61rem 6.25rem; }
.category .bar, .details .bar { padding-left: 1rem; }
.category .bar { letter-spacing: .045em; }
.panel { width: 35rem; height: 37.3rem; margin-left: 1.4rem; padding: .95rem 1.4rem 0 2.1rem; background: #f4f4f4; border-radius: 3px; }
.panel h3 { font-weight: 700; font-size: 1.9rem; letter-spacing: .01em; }
.panel .item { display: grid; grid-template-columns: 7rem 15.5rem 6.9rem 1fr; align-items: end; height: 6.56rem; padding-bottom: .9rem; border-bottom: 1px solid #aaa; }
.thumb { width: 5.1rem; height: 3.8rem; }
.item strong { padding-bottom: .4rem; font-size: 1.8rem; letter-spacing: 0; }
.item span { padding-bottom: .1rem; font-size: 1.65rem; letter-spacing: 0; }
.next { width: .9rem; height: 1.4rem; margin-bottom: .6rem; }
.panel.single { height: 7rem; padding: 0 1.8rem 0 1.6rem; }
.single .item { grid-template-columns: 6.2rem 17.2rem 6.5rem 1fr; height: 5.45rem; }
.single .thumb { height: 3rem; }
.single .item strong, .single .item span { padding-bottom: 0; }
.category .btn { width: 12.6rem; margin-left: 11.9rem; }

.details .content { grid-template-rows: 5rem 8.27rem 9.76rem 6.27rem 5.2rem 6.1rem 5.16rem 7.29rem 7.85rem; }
.head { width: 32.6rem; height: 4.3rem; margin-left: 3.25rem; padding: 0 1.6rem 0 1.9rem; font-size: 1.95rem; }
.options { width: 32.6rem; height: 9.76rem; margin-left: 3.25rem; padding: 1.2rem 1.5rem 0 1.3rem; background: #f4f4f4; font-size: 1.9rem; border-radius: 3px; }
.options div { display: flex; align-items: center; gap: 1.9rem; height: 3.5rem; padding-left: .65rem; }
.options .chosen { margin-top: .6rem; background: #dedede; }
.options svg { width: 1.6rem; height: 1.5rem; }
.details label { margin-left: 3.6rem; font-size: 1.95rem; }
.details .grey { width: 32.7rem; height: 4.1rem; margin-left: 3.8rem; padding: 0 2rem 0 1.7rem; }
.details .field { width: 32.3rem; height: 3.95rem; margin-left: 3.65rem; padding-left: 1.8rem; font-size: 1.65rem; letter-spacing: 0; }
.details .btn { width: 12.6rem; margin-left: 12.9rem; font-size: 1.7rem; }
.details .pair { gap: 4.8rem; margin-left: 4.15rem; }
.details .pair .btn { margin: 0; }

.analyze .content { grid-template-rows: 5.03rem 12.92rem 6.02rem 6.55rem 8.58rem 24.7rem; }
.analyze .bar { padding: 0 1.7rem 0 1.45rem; letter-spacing: .01em; }
.range { display: flex; align-items: center; justify-content: space-between; width: 33.6rem; height: 9.3rem; margin-left: 2.35rem; padding: 0 1.1rem 0 2.2rem; background: #f4f4f4; border-radius: 3px; }
.range strong, .filter strong { font-size: 1.8rem; letter-spacing: .01em; }
.range div { display: grid; grid-template-rows: 1.9rem 3rem 2.1rem; align-items: center; text-align: center; width: 12.5rem; font-size: 1.55rem; }
.date { height: 100%; background: #fff; line-height: 1.8rem; }
.filter { display: flex; align-items: center; gap: .7rem; margin-left: 2.3rem; }
.filter strong { width: 16.4rem; height: 3.3rem; padding-left: 1.5rem; background: #f4f4f4; line-height: 2.9rem; }
.filter .select { width: 16.4rem; height: 2.7rem; padding: 0 1rem 0 1.2rem; }
.analyze .btn { width: 18.2rem; height: 4.1rem; margin-left: 11.1rem; }
.legend { display: flex; flex-wrap: wrap; justify-content: center; gap: .95rem 1rem; width: 27.5rem; margin-left: 5.2rem; font: 1.08rem/1.2rem "Noto Sans", sans-serif; letter-spacing: 0; word-spacing: 0; }
.legend span { display: flex; gap: .6rem; }
.legend span::before { content: ""; width: 4.1rem; height: 1.25rem; background: #bdbdbd; }
.legend span:nth-child(2)::before { background: #9e9e9e; }
.legend span:nth-child(3)::before { background: #757575; }
.legend span:nth-child(4)::before { background: #616161; }
.legend span:nth-child(5)::before { background: #424242; }
.chart { width: 23.6rem; height: 23.6rem; margin-left: 7.1rem; }

.work .content { grid-template-rows: 4.7rem 4.93rem 25.72rem 25.35rem; }
.work .bar, .general .bar { padding-left: .6rem; }
.work .search { margin-left: 3.9rem; }
.work .record { height: 22.8rem; padding: .95rem 0 0 1.1rem; font-size: 1.75rem; line-height: 1.72rem; }
.work .record.second { margin-left: 1.75rem; }
.work .pair { gap: 3.9rem; margin: 2.35rem 0 0 3.9rem; }
.work .btn { height: 3.5rem; font-size: 1.35rem; }
.work .btn + .btn { width: 11.7rem; }

.general .content { grid-template-rows: 4.74rem 6.56rem 5.1rem 4.67rem 12.43rem 6.23rem 13.75rem 8.62rem; }
.general .bar { padding-right: 1.9rem; letter-spacing: .04em; }
.general h4 { margin-left: 3.4rem; font-size: 1.9rem; letter-spacing: .04em; }
.general h4.minor { margin-left: 3.7rem; font-size: 1.7rem; }
.general .grey { width: 23.1rem; height: 4rem; margin-left: 12rem; padding: 0 2.8rem 0 2.1rem; font-size: 1.55rem; }
.checks { display: grid; grid-template-rows: repeat(3, 3.36rem); align-items: center; width: 26.9rem; height: 11.25rem; margin-left: 6.85rem; padding: 1.2rem 0 0 1.8rem; background: #f4f4f4; border-radius: 3px; }
.checks p { display: flex; align-items: center; gap: 2.2rem; font-size: 1.7rem; }
.checks svg { width: 1.5rem; height: 1.35rem; }
.checks.low { grid-template-rows: repeat(3, 3.9rem); width: 25rem; height: 12.75rem; margin-left: 7.9rem; padding-top: .8rem; }
.checks.low p { gap: 2rem; }
.general .btn { width: 18.1rem; height: 4.15rem; margin-left: 9.65rem; font-size: 1.8rem; }
```
